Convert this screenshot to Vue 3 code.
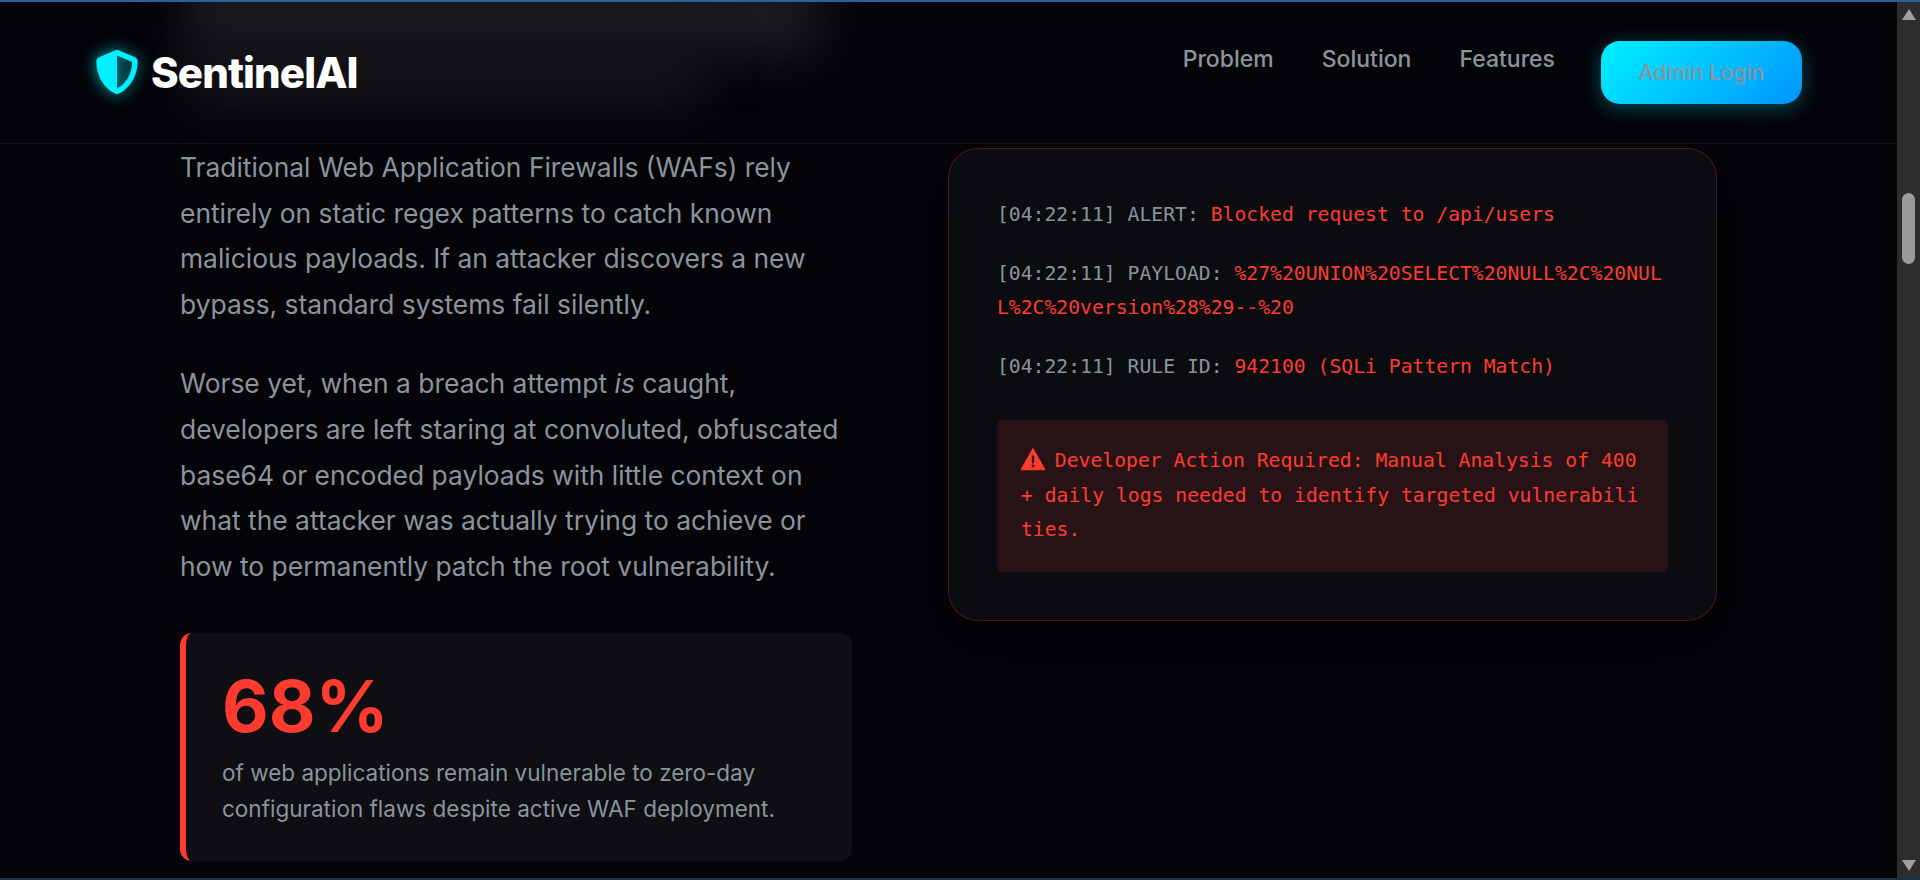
<template>
  <div class="window">
    <main class="page">
      <div class="ghost-heading" aria-hidden="true">
        <div class="ghost-line ghost-one"></div>
        <div class="ghost-line ghost-two"></div>
      </div>

      <header class="topbar">
        <a class="logo">
          <svg class="logo-icon" viewBox="0 0 512 512" width="44" height="44">
            <path fill="#00f0ff" d="M466.5 83.7l-192-80a48.15 48.15 0 0 0-36.9 0l-192 80C27.7 91.1 16 108.6 16 128c0 198.5 114.5 335.7 221.5 380.3 11.8 4.9 25.1 4.9 36.9 0C360.1 472.6 496 349.3 496 128c0-19.4-11.7-36.9-29.5-44.3zM256.1 446.3l-.1-381 175.9 73.3c-3.3 151.4-82.1 261.1-175.8 307.7z" />
          </svg>
          <span class="logo-text">SentinelAI</span>
        </a>
        <nav class="nav">
          <a v-for="link in links" :key="link" class="nav-link">{{ link }}</a>
          <button class="login-btn">Admin Login</button>
        </nav>
      </header>

      <section class="problem">
        <div class="problem-copy">
          <p class="lead">
            Traditional Web Application Firewalls (WAFs) rely entirely on static regex patterns to catch known
            malicious payloads. If an attacker discovers a new bypass, standard systems fail silently.
          </p>
          <p class="lead">
            Worse yet, when a breach attempt <em>is</em> caught, developers are left staring at convoluted,
            obfuscated base64 or encoded payloads with little context on what the attacker was actually trying
            to achieve or how to permanently patch the root vulnerability.
          </p>
          <div class="stat">
            <div class="stat-num">68%</div>
            <div class="stat-label">
              of web applications remain vulnerable to zero-day configuration flaws despite active WAF deployment.
            </div>
          </div>
        </div>

        <div class="problem-log">
          <div class="terminal">
            <div v-for="row in logRows" :key="row.label" class="log-row">
              [04:22:11] {{ row.label }}: <span class="log-red">{{ row.value }}</span>
            </div>
            <div class="log-alert">
              <svg class="warn-icon" viewBox="0 0 24 24" width="24" height="24">
                <path d="M12 2 L23.5 22.5 H0.5 Z" fill="#ff3b30" stroke="#ff3b30" stroke-width="1.5" stroke-linejoin="round" />
                <rect x="10.8" y="8.5" width="2.4" height="8" rx="1" fill="#271315" />
                <circle cx="12" cy="19" r="1.4" fill="#271315" />
              </svg>
              Developer Action Required: Manual Analysis of 400+ daily logs needed to identify targeted vulnerabilities.
            </div>
          </div>
        </div>
      </section>
    </main>

    <aside class="scrollbar" aria-hidden="true">
      <span class="arrow arrow-up"></span>
      <span class="thumb"></span>
      <span class="arrow arrow-down"></span>
    </aside>

    <div class="edge edge-top"></div>
    <div class="edge edge-bottom"></div>
  </div>
</template>

<script setup>
const links = ['Problem', 'Solution', 'Features']

const logRows = [
  { label: 'ALERT', value: 'Blocked request to /api/users' },
  { label: 'PAYLOAD', value: '%27%20UNION%20SELECT%20NULL%2C%20NULL%2C%20version%28%29--%20' },
  { label: 'RULE ID', value: '942100 (SQLi Pattern Match)' },
]
</script>

<style>
html,
body {
  margin: 0;
  background: #040409;
  overflow: hidden;
}
</style>

<style scoped>
.window {
  position: relative;
  display: flex;
  height: 880px;
  overflow: hidden;
  background: #040409;
  font-family: Inter, "Noto Sans", sans-serif;
}

.page {
  position: relative;
  flex: 1;
  min-width: 0;
  overflow: hidden;
}

/* blurred section heading that sits behind the glass header */
.ghost-heading {
  position: absolute;
  top: 0;
  left: 0;
  right: 0;
  height: 143px;
  overflow: hidden;
}

.ghost-line {
  position: absolute;
  background: #1b1b1f;
  filter: blur(24px);
}

.ghost-one {
  top: -30px;
  left: 185px;
  width: 635px;
  height: 85px;
}

.ghost-two {
  top: 45px;
  left: 185px;
  width: 520px;
  height: 60px;
  background: #151519;
}

.topbar {
  position: relative;
  display: flex;
  justify-content: space-between;
  align-items: center;
  box-sizing: border-box;
  height: 144px;
  padding: 1px 95px 0 95px;
  border-bottom: 1px solid #14151a;
}

.logo {
  display: flex;
  align-items: center;
  gap: 12px;
}

.logo-icon {
  filter: drop-shadow(0 0 8px rgba(0, 240, 255, 0.7));
}

.logo-text {
  font-size: 42px;
  font-weight: 800;
  color: #fff;
  letter-spacing: -0.9px;
}

.nav {
  display: flex;
  align-items: flex-start;
  gap: 48px;
}

.nav-link {
  font-size: 23px;
  font-weight: 500;
  line-height: 36px;
  color: #8b949e;
}

.login-btn {
  width: 201px;
  height: 63px;
  margin-left: -2px;
  border: none;
  border-radius: 19px;
  background: linear-gradient(135deg, #00f0ff, #0095ff);
  box-shadow: 0 4px 20px rgba(0, 240, 255, 0.3);
  font-family: inherit;
  font-size: 21px;
  font-weight: 500;
  color: #8b949e;
}

.problem {
  display: grid;
  grid-template-columns: 672px 769px;
  gap: 96px;
  margin-left: 180px;
}

.problem-copy {
  padding-top: 1px;
}

.lead {
  margin: 0 0 34px;
  font-size: 26.4px;
  line-height: 45.6px;
  color: #8b949e;
}

.lead em {
  font-style: italic;
}

.stat {
  margin-top: 44px;
  height: 228px;
  box-sizing: border-box;
  padding: 37px 36px 0;
  border-left: 6px solid #ff3b30;
  border-radius: 12px;
  background: #0e0e13;
}

.stat-num {
  font-size: 72px;
  font-weight: 700;
  line-height: 72px;
  color: #ff3b30;
}

.stat-label {
  margin-top: 13px;
  font-size: 22.5px;
  line-height: 35.84px;
  color: #8b949e;
}

.problem-log {
  padding-top: 4px;
}

.terminal {
  padding: 49px 48px 48px;
  border: 1px solid rgba(255, 59, 48, 0.25);
  border-radius: 30px;
  background: #0a0c10;
  box-shadow: 0 20px 50px rgba(0, 0, 0, 0.5);
  font-family: "DejaVu Sans Mono", "Liberation Mono", monospace;
  font-size: 19.73px;
  line-height: 34.56px;
  color: #8b949e;
  word-break: break-all;
}

.log-row {
  margin-bottom: 24px;
}

.log-red {
  color: #ff3b30;
}

.log-alert {
  margin-top: 36px;
  padding: 24px;
  border-radius: 6px;
  background: #271315;
  color: #ff3b30;
}

.warn-icon {
  vertical-align: -4px;
  margin-right: -2px;
}

.scrollbar {
  position: relative;
  flex: 0 0 23px;
  display: flex;
  flex-direction: column;
  align-items: center;
  background: #2d2d2d;
}

.arrow {
  position: absolute;
  left: 5px;
  width: 0;
  height: 0;
  border-left: 7px solid transparent;
  border-right: 7px solid transparent;
}

.arrow-up {
  top: 9px;
  border-bottom: 11px solid #a0a0a0;
}

.arrow-down {
  bottom: 9px;
  border-top: 11px solid #a0a0a0;
}

.thumb {
  margin-top: 193px;
  width: 13px;
  height: 71px;
  border-radius: 7px;
  background: #9b9b9b;
}

.edge {
  position: absolute;
  left: 0;
  right: 0;
  height: 2px;
}

.edge-top {
  top: 0;
  background: #2b5f9e;
}

.edge-bottom {
  bottom: 0;
  background: #16324a;
}
</style>
